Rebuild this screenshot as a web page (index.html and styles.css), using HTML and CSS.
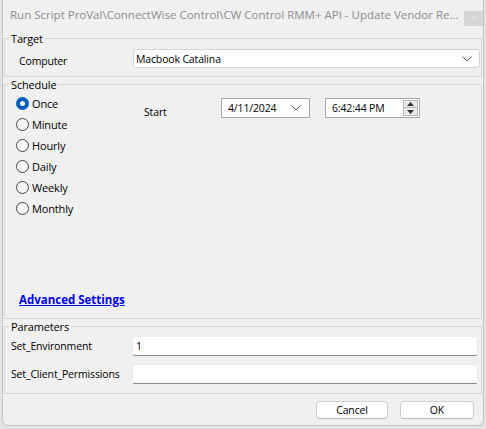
FILE: index.html
```html
<!DOCTYPE html>
<html lang="en">
<head>
<meta charset="utf-8">
<title>Run Script</title>
<link rel="stylesheet" href="styles.css">
</head>
<body>
<div class="window">
  <div class="titlebar">
    <span class="title">Run Script ProVal\ConnectWise Control\CW Control RMM+ API - Update Vendor Re...</span>
    <span class="close">&#x2715;</span>
  </div>

  <fieldset class="group target">
    <legend>Target</legend>
    <div class="row">
      <span class="row-label">Computer</span>
      <div class="combo">
        <span class="combo-text">Macbook Catalina</span>
        <svg class="chev" width="10" height="6" viewBox="0 0 10 6"><polyline points="0.5,0.5 5,5 9.5,0.5" fill="none" stroke="#5a5a5a" stroke-width="1"/></svg>
      </div>
    </div>
  </fieldset>

  <fieldset class="group schedule">
    <legend>Schedule</legend>
    <div class="sched-body">
      <div class="radios">
        <div class="radio checked"><span class="dot"></span><span>Once</span></div>
        <div class="radio"><span class="dot"></span><span>Minute</span></div>
        <div class="radio"><span class="dot"></span><span>Hourly</span></div>
        <div class="radio"><span class="dot"></span><span>Daily</span></div>
        <div class="radio"><span class="dot"></span><span>Weekly</span></div>
        <div class="radio"><span class="dot"></span><span>Monthly</span></div>
      </div>
      <div class="start">
        <span class="start-label">Start</span>
        <div class="picker date">
          <span>4/11/2024</span>
          <svg class="chev" width="10" height="6" viewBox="0 0 10 6"><polyline points="0.5,0.5 5,5 9.5,0.5" fill="none" stroke="#5a5a5a" stroke-width="1"/></svg>
        </div>
        <div class="picker time">
          <span>6:42:44 PM</span>
          <div class="spin">
            <span class="spin-btn"><svg width="7" height="4" viewBox="0 0 7 4"><polygon points="3.5,0 7,4 0,4" fill="#333"/></svg></span>
            <span class="spin-btn"><svg width="7" height="4" viewBox="0 0 7 4"><polygon points="0,0 7,0 3.5,4" fill="#333"/></svg></span>
          </div>
        </div>
      </div>
    </div>
    <a class="adv" href="#">Advanced Settings</a>
  </fieldset>

  <fieldset class="group params">
    <legend>Parameters</legend>
    <div class="param">
      <span class="param-label">Set_Environment</span>
      <div class="field">1</div>
    </div>
    <div class="param">
      <span class="param-label">Set_Client_Permissions</span>
      <div class="field"></div>
    </div>
  </fieldset>

  <div class="buttons">
    <button class="btn cancel">Cancel</button>
    <button class="btn ok">OK</button>
  </div>
</div>
</body>
</html>
```

FILE: styles.css
```css
html, body {
  margin: 0;
  padding: 0;
}
body {
  width: 486px;
  height: 429px;
  overflow: hidden;
  background-color: #e2e2e2;
  font-family: "Open Sans", "Noto Sans", sans-serif;
  font-size: 10.5px;
  letter-spacing: -0.15px;
  color: #000;
}
.window {
  box-sizing: border-box;
  margin-left: 2px;
  width: 482px;
  height: 426px;
  background: #f0f0f0;
  border: 1px solid #c4c4c4;
  border-top: none;
  border-radius: 0 0 6px 6px;
  display: flex;
  flex-direction: column;
}
.titlebar {
  height: 31px;
  display: flex;
  align-items: flex-start;
  padding-left: 7px;
}
.title {
  flex: 1;
  margin-top: 7px;
  font-size: 11.5px;
  letter-spacing: 0;
  line-height: 16px;
  color: #8e8e8e;
  white-space: nowrap;
  overflow: hidden;
}
.close {
  width: 19px;
  height: 15px;
  margin-top: 11px;
  background: #d6d6d6;
  color: #e6e6e6;
  font-size: 6px;
  line-height: 15px;
  text-align: center;
}
.group {
  margin: 0 1px;
  padding: 0;
  border: 1px solid #d7d7d7;
  min-width: 0;
}
.group legend {
  margin-left: 4px;
  padding: 0 2px;
  font-size: 11px;
  line-height: 15px;
}

/* Target */
.target {
  padding-bottom: 8px;
}
.row {
  display: flex;
  align-items: center;
  margin-top: 3px;
}
.row-label {
  box-sizing: border-box;
  width: 128px;
  padding-left: 14px;
  padding-top: 4px;
}
.combo {
  box-sizing: border-box;
  flex: 1;
  height: 19px;
  margin-right: 1px;
  background: #fff;
  border: 1px solid #d3d3d3;
  border-radius: 3px;
  display: flex;
  align-items: center;
  padding: 0 7px 0 2px;
}
.combo-text {
  flex: 1;
}

/* Schedule */
.schedule {
  padding-bottom: 10px;
}
.sched-body {
  display: flex;
  align-items: flex-start;
  padding-top: 1px;
}
.radios {
  width: 139px;
  display: flex;
  flex-direction: column;
}
.radio {
  height: 21px;
  display: flex;
  align-items: center;
  padding-left: 11px;
  font-size: 11px;
}
.dot {
  box-sizing: border-box;
  width: 13px;
  height: 13px;
  border-radius: 50%;
  border: 1px solid #444;
  background: #f6f6f6;
  margin-right: 3px;
  display: flex;
  align-items: center;
  justify-content: center;
}
.radio.checked .dot {
  border: none;
  background: #005fb8;
}
.radio.checked .dot::after {
  content: "";
  width: 5px;
  height: 5px;
  border-radius: 50%;
  background: #fff;
}
.start {
  display: flex;
  align-items: flex-start;
  margin-top: 5px;
}
.start-label {
  width: 77px;
  margin-top: 6px;
  line-height: 16px;
}
.picker {
  box-sizing: border-box;
  height: 20px;
  background: #fff;
  border: 1px solid #a9a9a9;
  display: flex;
  align-items: center;
}
.date {
  width: 89px;
  padding: 0 8px 0 6px;
  justify-content: space-between;
}
.time {
  width: 95px;
  margin-left: 15px;
  padding: 0 1px 0 6px;
  justify-content: space-between;
}
.spin {
  display: flex;
  flex-direction: column;
}
.spin-btn {
  box-sizing: border-box;
  width: 15px;
  height: 8px;
  border: 1px solid #b5b5b5;
  background: #ececec;
  display: flex;
  align-items: center;
  justify-content: center;
}
.spin-btn + .spin-btn {
  border-top: none;
}
.adv {
  display: block;
  margin-top: 73px;
  margin-left: 14px;
  width: max-content;
  color: #0000ee;
  font-weight: bold;
  font-size: 11.5px;
  letter-spacing: 0;
  line-height: 16px;
  text-decoration: underline;
}

/* Parameters */
.params {
  padding-bottom: 9px;
}
.param {
  display: flex;
  align-items: center;
  margin-top: 2px;
}
.param + .param {
  margin-top: 8px;
}
.param-label {
  box-sizing: border-box;
  width: 127px;
  padding-left: 6px;
}
.field {
  box-sizing: border-box;
  flex: 1;
  height: 20px;
  margin-right: 3px;
  background: #fff;
  border: 1px solid #ececec;
  border-bottom-color: #8a8a8a;
  border-radius: 3px;
  padding: 1px 3px 0;
  line-height: 16px;
}

/* Buttons */
.buttons {
  display: flex;
  justify-content: flex-end;
  gap: 12px;
  margin-top: 7px;
  padding-right: 9px;
}
.btn {
  box-sizing: border-box;
  height: 18px;
  padding: 0;
  font-family: "Open Sans", "Noto Sans", sans-serif;
  font-size: 10.5px;
  letter-spacing: -0.15px;
  line-height: 16px;
  color: #000;
  background: #fdfdfd;
  border: 1px solid #d0d0d0;
  border-bottom-color: #bcbcbc;
  border-radius: 4px;
}
.cancel {
  width: 72px;
}
.ok {
  width: 74px;
}
```
